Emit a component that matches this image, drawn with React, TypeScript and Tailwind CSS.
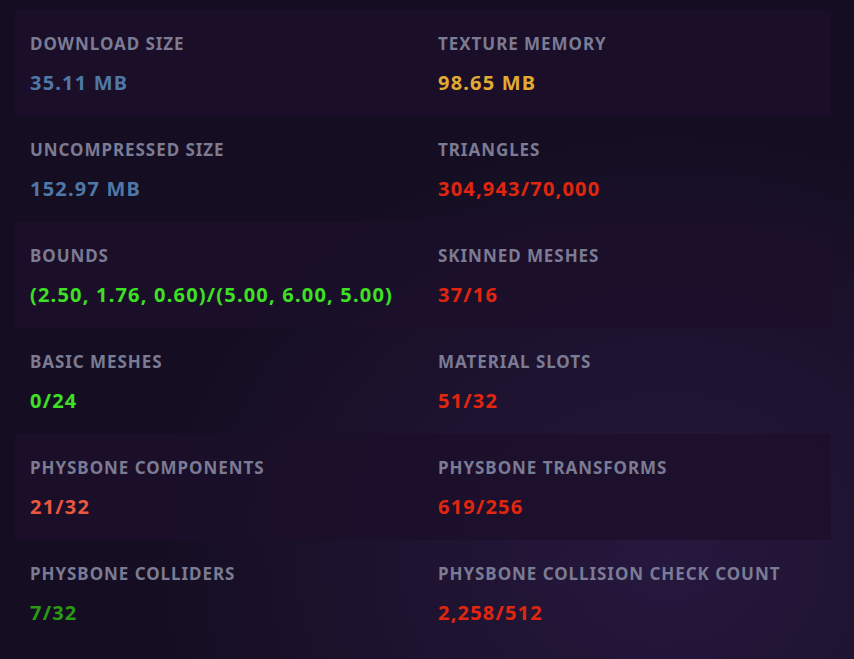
import React from "react";

type Stat = { label: string; value: string; color: string };

const rows: [Stat, Stat][] = [
  [
    { label: "DOWNLOAD SIZE", value: "35.11 MB", color: "text-[#4f78a6]" },
    { label: "TEXTURE MEMORY", value: "98.65 MB", color: "text-[#e2aa32]" },
  ],
  [
    { label: "UNCOMPRESSED SIZE", value: "152.97 MB", color: "text-[#4f78a6]" },
    { label: "TRIANGLES", value: "304,943/70,000", color: "text-[#e0260e]" },
  ],
  [
    { label: "BOUNDS", value: "(2.50, 1.76, 0.60)/(5.00, 6.00, 5.00)", color: "text-[#3ee024]" },
    { label: "SKINNED MESHES", value: "37/16", color: "text-[#e0260e]" },
  ],
  [
    { label: "BASIC MESHES", value: "0/24", color: "text-[#3ee024]" },
    { label: "MATERIAL SLOTS", value: "51/32", color: "text-[#e0260e]" },
  ],
  [
    { label: "PHYSBONE COMPONENTS", value: "21/32", color: "text-[#e85840]" },
    { label: "PHYSBONE TRANSFORMS", value: "619/256", color: "text-[#e0260e]" },
  ],
  [
    { label: "PHYSBONE COLLIDERS", value: "7/32", color: "text-[#2a9a12]" },
    { label: "PHYSBONE COLLISION CHECK COUNT", value: "2,258/512", color: "text-[#e0260e]" },
  ],
];

function Cell({ s }: { s: Stat }) {
  return (
    <div className="flex flex-col px-[15px] pt-[24px]">
      <div className="text-[17px] leading-[20px] font-bold tracking-[0.95px] text-[#7b7b94]">{s.label}</div>
      <div className={`mt-[17px] text-[20px] leading-[24px] font-bold tracking-[1.2px] ${s.color}`}>{s.value}</div>
    </div>
  );
}

export default function App() {
  return (
    <div
      className="relative w-[854px] h-[659px] overflow-hidden bg-[#150e22] pt-[10px] px-[15px]"
      style={{ fontFamily: '"Noto Sans", "Open Sans", sans-serif' }}
    >
      <div className="pointer-events-none absolute inset-0 bg-[radial-gradient(ellipse_at_78%_85%,rgba(60,35,95,0.45),rgba(21,14,34,0)_55%)]" />
      <div className="relative flex w-[816px] flex-col">
        {rows.map((r, i) => (
          <div
            key={i}
            className={`grid h-[106px] grid-cols-2 ${i % 2 === 0 ? "bg-[#1c0f2b]/80" : ""}`}
          >
            <Cell s={r[0]} />
            <Cell s={r[1]} />
          </div>
        ))}
      </div>
    </div>
  );
}
